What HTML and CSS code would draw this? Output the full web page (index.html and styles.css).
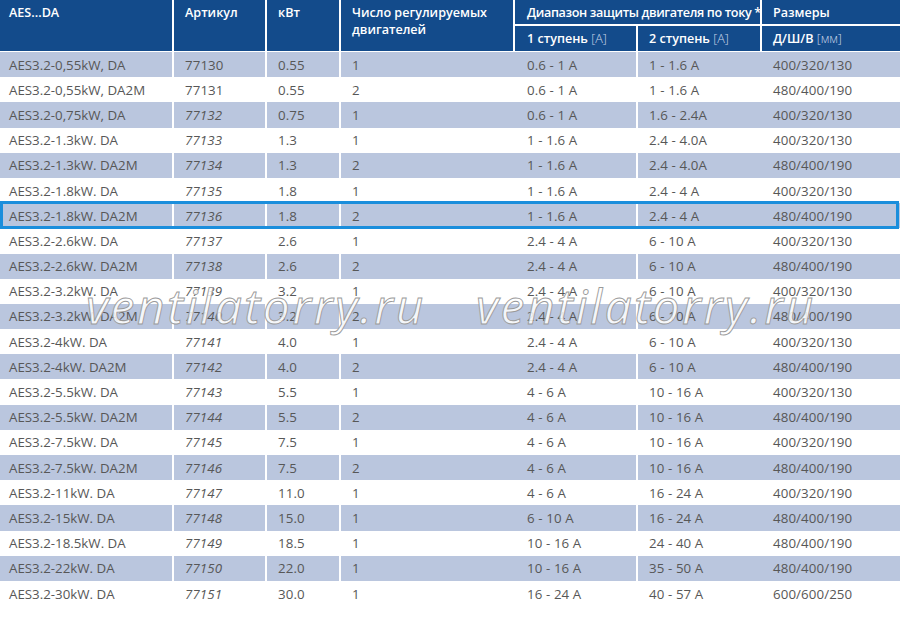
FILE: index.html
```html
<!DOCTYPE html>
<html lang="ru">
<head>
<meta charset="utf-8">
<title>AES...DA</title>
<link rel="stylesheet" href="styles.css">
</head>
<body>
<div class="sheet">
  <div class="head">
    <div class="h h-model">AES...DA</div>
    <div class="h h-art">Артикул</div>
    <div class="h h-kw">кВт</div>
    <div class="h h-num">Число регулируемых двигателей</div>
    <div class="h h-range">Диапазон защиты двигателя по току *</div>
    <div class="h h-size">Размеры</div>
    <div class="h h-s1">1 ступень <span class="unit">[A]</span></div>
    <div class="h h-s2">2 ступень <span class="unit">[A]</span></div>
    <div class="h h-dim">Д/Ш/В <span class="unit">[мм]</span></div>
  </div>
  <div class="body">
    <div class="row shade"><span class="c">AES3.2-0,55kW, DA</span><span class="c sep">77130</span><span class="c sep">0.55</span><span class="c sep">1</span><span class="c">0.6 - 1 A</span><span class="c sep">1 - 1.6 A</span><span class="c">400/320/130</span></div>
    <div class="row"><span class="c">AES3.2-0,55kW, DA2M</span><span class="c sep">77131</span><span class="c sep">0.55</span><span class="c sep">2</span><span class="c">0.6 - 1 A</span><span class="c sep">1 - 1.6 A</span><span class="c">480/400/190</span></div>
    <div class="row shade"><span class="c">AES3.2-0,75kW, DA</span><span class="c sep it">77132</span><span class="c sep">0.75</span><span class="c sep">1</span><span class="c">0.6 - 1 A</span><span class="c sep">1.6 - 2.4A</span><span class="c">400/320/130</span></div>
    <div class="row"><span class="c">AES3.2-1.3kW. DA</span><span class="c sep it">77133</span><span class="c sep">1.3</span><span class="c sep">1</span><span class="c">1 - 1.6 A</span><span class="c sep">2.4 - 4.0A</span><span class="c">400/320/130</span></div>
    <div class="row shade"><span class="c">AES3.2-1.3kW. DA2M</span><span class="c sep it">77134</span><span class="c sep">1.3</span><span class="c sep">2</span><span class="c">1 - 1.6 A</span><span class="c sep">2.4 - 4.0A</span><span class="c">480/400/190</span></div>
    <div class="row"><span class="c">AES3.2-1.8kW. DA</span><span class="c sep it">77135</span><span class="c sep">1.8</span><span class="c sep">1</span><span class="c">1 - 1.6 A</span><span class="c sep">2.4 - 4 A</span><span class="c">400/320/130</span></div>
    <div class="row shade selected"><span class="c">AES3.2-1.8kW. DA2M</span><span class="c sep it">77136</span><span class="c sep">1.8</span><span class="c sep">2</span><span class="c">1 - 1.6 A</span><span class="c sep">2.4 - 4 A</span><span class="c">480/400/190</span></div>
    <div class="row"><span class="c">AES3.2-2.6kW. DA</span><span class="c sep it">77137</span><span class="c sep">2.6</span><span class="c sep">1</span><span class="c">2.4 - 4 A</span><span class="c sep">6 - 10 A</span><span class="c">400/320/130</span></div>
    <div class="row shade"><span class="c">AES3.2-2.6kW. DA2M</span><span class="c sep it">77138</span><span class="c sep">2.6</span><span class="c sep">2</span><span class="c">2.4 - 4 A</span><span class="c sep">6 - 10 A</span><span class="c">480/400/190</span></div>
    <div class="row"><span class="c">AES3.2-3.2kW. DA</span><span class="c sep it">77139</span><span class="c sep">3.2</span><span class="c sep">1</span><span class="c">2.4 - 4 A</span><span class="c sep">6 - 10 A</span><span class="c">400/320/130</span></div>
    <div class="row shade"><span class="c">AES3.2-3.2kW. DA2M</span><span class="c sep it">77140</span><span class="c sep">3.2</span><span class="c sep">2</span><span class="c">2.4 - 4 A</span><span class="c sep">6 - 10 A</span><span class="c">480/400/190</span></div>
    <div class="row"><span class="c">AES3.2-4kW. DA</span><span class="c sep it">77141</span><span class="c sep">4.0</span><span class="c sep">1</span><span class="c">2.4 - 4 A</span><span class="c sep">6 - 10 A</span><span class="c">400/320/130</span></div>
    <div class="row shade"><span class="c">AES3.2-4kW. DA2M</span><span class="c sep it">77142</span><span class="c sep">4.0</span><span class="c sep">2</span><span class="c">2.4 - 4 A</span><span class="c sep">6 - 10 A</span><span class="c">480/400/190</span></div>
    <div class="row"><span class="c">AES3.2-5.5kW. DA</span><span class="c sep it">77143</span><span class="c sep">5.5</span><span class="c sep">1</span><span class="c">4 - 6 A</span><span class="c sep">10 - 16 A</span><span class="c">400/320/130</span></div>
    <div class="row shade"><span class="c">AES3.2-5.5kW. DA2M</span><span class="c sep it">77144</span><span class="c sep">5.5</span><span class="c sep">2</span><span class="c">4 - 6 A</span><span class="c sep">10 - 16 A</span><span class="c">480/400/190</span></div>
    <div class="row"><span class="c">AES3.2-7.5kW. DA</span><span class="c sep it">77145</span><span class="c sep">7.5</span><span class="c sep">1</span><span class="c">4 - 6 A</span><span class="c sep">10 - 16 A</span><span class="c">400/320/190</span></div>
    <div class="row shade"><span class="c">AES3.2-7.5kW. DA2M</span><span class="c sep it">77146</span><span class="c sep">7.5</span><span class="c sep">2</span><span class="c">4 - 6 A</span><span class="c sep">10 - 16 A</span><span class="c">480/400/190</span></div>
    <div class="row"><span class="c">AES3.2-11kW. DA</span><span class="c sep it">77147</span><span class="c sep">11.0</span><span class="c sep">1</span><span class="c">4 - 6 A</span><span class="c sep">16 - 24 A</span><span class="c">400/320/190</span></div>
    <div class="row shade"><span class="c">AES3.2-15kW. DA</span><span class="c sep it">77148</span><span class="c sep">15.0</span><span class="c sep">1</span><span class="c">6 - 10 A</span><span class="c sep">16 - 24 A</span><span class="c">480/400/190</span></div>
    <div class="row"><span class="c">AES3.2-18.5kW. DA</span><span class="c sep it">77149</span><span class="c sep">18.5</span><span class="c sep">1</span><span class="c">10 - 16 A</span><span class="c sep">24 - 40 A</span><span class="c">480/400/190</span></div>
    <div class="row shade"><span class="c">AES3.2-22kW. DA</span><span class="c sep it">77150</span><span class="c sep">22.0</span><span class="c sep">1</span><span class="c">10 - 16 A</span><span class="c sep">35 - 50 A</span><span class="c">480/400/190</span></div>
    <div class="row"><span class="c">AES3.2-30kW. DA</span><span class="c sep it">77151</span><span class="c sep">30.0</span><span class="c sep">1</span><span class="c">16 - 24 A</span><span class="c sep">40 - 57 A</span><span class="c">600/600/250</span></div>
  </div>
  <div class="watermark" aria-hidden="true">
    <span class="wm">ventilatorry.ru</span>
    <span class="wm">ventilatorry.ru</span>
  </div>
</div>
</body>
</html>
```

FILE: styles.css
```css
html, body {
  margin: 0;
  padding: 0;
  background: #ffffff;
}

.sheet {
  position: relative;
  width: 900px;
  height: 618px;
  overflow: hidden;
  font-family: "Open Sans", "Noto Sans", "Liberation Sans", sans-serif;
}

.head {
  display: grid;
  grid-template-columns: 172px 91px 72px 172px 121px 122px 138px;
  grid-template-rows: 24px 25px;
  column-gap: 2px;
  row-gap: 2px;
  width: 900px;
}

.h {
  background: #134b8b;
  color: #ffffff;
  font-size: 12.6px;
  font-weight: 600;
  line-height: 17px;
  padding: 4px 0 0 11px;
  box-sizing: border-box;
  white-space: nowrap;
}

.h-model { grid-column: 1; grid-row: 1 / 3; padding-left: 9px; }
.h-art { grid-column: 2; grid-row: 1 / 3; }
.h-kw { grid-column: 3; grid-row: 1 / 3; }
.h-num { grid-column: 4; grid-row: 1 / 3; white-space: normal; padding-right: 20px; }
.h-range { grid-column: 5 / 7; grid-row: 1; padding-left: 12px; letter-spacing: -0.35px; }
.h-size { grid-column: 7; grid-row: 1; }
.h-s1 { grid-column: 5; grid-row: 2; padding-left: 12px; }
.h-s2 { grid-column: 6; grid-row: 2; }
.h-dim { grid-column: 7; grid-row: 2; }

.unit {
  font-weight: 300;
  color: #c9d5e8;
}

.body {
  margin-top: 1px;
}

.row {
  position: relative;
  display: grid;
  grid-template-columns: 172px 91px 72px 172px 121px 122px 138px;
  column-gap: 2px;
  height: 25.2px;
  background: #ffffff;
}

.row.shade {
  background: #bac6de;
}

.c {
  display: flex;
  align-items: center;
  height: 100%;
  padding-left: 11px;
  color: #575757;
  font-size: 13.3px;
  letter-spacing: 0.1px;
  white-space: nowrap;
  box-sizing: border-box;
}

.c:first-child { padding-left: 9px; letter-spacing: 0; }
.c:nth-child(5) { padding-left: 12px; }

.c.sep {
  box-shadow: -2px 0 0 #ffffff;
}

.c.it { font-style: italic; }

.row.selected {
  z-index: 2;
}

.row.selected::after {
  content: "";
  position: absolute;
  left: 0;
  right: 1px;
  top: -2px;
  bottom: -1px;
  border: 3px solid #1b8edc;
  pointer-events: none;
}

.watermark {
  position: absolute;
  left: 86px;
  top: 274px;
  display: flex;
  gap: 50px;
  pointer-events: none;
  z-index: 3;
}

.wm {
  font-family: "Open Sans", "Noto Sans", sans-serif;
  font-style: italic;
  font-weight: 500;
  font-size: 48px;
  letter-spacing: 2.5px;
  color: rgba(255, 255, 255, 0.85);
  -webkit-text-stroke: 0.9px #9a9a9a;
  white-space: nowrap;
  line-height: 64px;
}
```
